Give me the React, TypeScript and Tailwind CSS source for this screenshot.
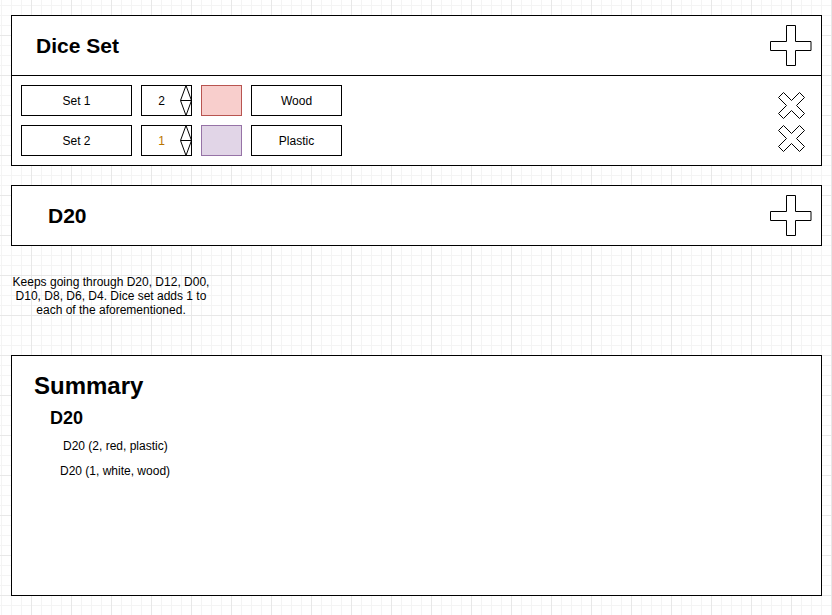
import React from 'react'

type DiceRow = {
  name: string
  count: number
  countColor: string
  swatch: string
  material: string
}

const rows: DiceRow[] = [
  { name: 'Set 1', count: 2, countColor: 'text-black', swatch: 'bg-[#f8cecc] border-[#b85450]', material: 'Wood' },
  { name: 'Set 2', count: 1, countColor: 'text-[#b87400]', swatch: 'bg-[#e1d5e7] border-[#9673a6]', material: 'Plastic' },
]

function PlusIcon() {
  return (
    <svg width="42" height="42" viewBox="0 0 42 42" className="shrink-0">
      <polygon
        points="16.5,0.5 25.5,0.5 25.5,16.5 41,16.5 41,25.5 25.5,25.5 25.5,40.5 16.5,40.5 16.5,25.5 0.5,25.5 0.5,16.5 16.5,16.5"
        fill="white"
        stroke="black"
        strokeWidth="1"
      />
    </svg>
  )
}

function CrossIcon() {
  // outlined X, arms cut square at the ends
  return (
    <svg width="27" height="27" viewBox="0 0 27 27" className="shrink-0">
      <polygon
        points="5.5,0.5 13.5,8.5 21.5,0.5 26.5,5.5 18.5,13.5 26.5,21.5 21.5,26.5 13.5,18.5 5.5,26.5 0.5,21.5 8.5,13.5 0.5,5.5"
        fill="white"
        stroke="black"
        strokeWidth="1"
      />
    </svg>
  )
}

function Spinner() {
  return (
    <svg width="12" height="31" viewBox="0 0 12 31" className="absolute right-[-1px] top-[-1px]">
      <polygon points="6,0.5 11.5,15.5 6,30.5 0.5,15.5" fill="none" stroke="black" strokeWidth="1" />
      <line x1="0.5" y1="15.5" x2="11.5" y2="15.5" stroke="black" strokeWidth="1" />
    </svg>
  )
}

function SetRow({ row }: { row: DiceRow }) {
  return (
    <div className="flex items-center gap-[9px] h-[31px] text-[12px] text-black">
      <div className="w-[111px] h-full border border-black bg-white flex items-center justify-center">
        {row.name}
      </div>
      <div className="relative w-[51px] h-full border border-black bg-white flex items-center pr-[10px] justify-center">
        <span className={row.countColor}>{row.count}</span>
        <Spinner />
      </div>
      <div className={`w-[41px] h-full border ${row.swatch}`} />
      <div className="w-[91px] h-full border border-black bg-white flex items-center justify-center">
        {row.material}
      </div>
    </div>
  )
}

export default function App() {
  return (
    <div className="w-[832px] h-[615px] overflow-hidden bg-white bg-[linear-gradient(to_right,#e8e8e8_1px,transparent_1px),linear-gradient(to_bottom,#e8e8e8_1px,transparent_1px),linear-gradient(to_right,#f4f4f4_1px,transparent_1px),linear-gradient(to_bottom,#f4f4f4_1px,transparent_1px)] bg-[size:40px_40px,40px_40px,10px_10px,10px_10px] bg-[position:31px_35px,31px_35px,1px_5px,1px_5px] font-['Liberation_Sans',Arial,sans-serif] text-black">
      <div className="flex flex-col pt-[15px] pl-[11px] pr-[10px]">
        {/* Dice Set panel */}
        <div className="h-[151px] border border-black bg-white flex flex-col">
          <div className="h-[59px] flex items-center justify-between pl-[24px] pr-[9px]">
            <h1 className="text-[21px] leading-[21px] font-bold">Dice Set</h1>
            <PlusIcon />
          </div>
          <div className="h-px bg-black" />
          <div className="h-[89px] flex pl-[9px]">
            <div className="flex flex-col gap-[9px] pt-[9px]">
              {rows.map((r) => (
                <SetRow key={r.name} row={r} />
              ))}
            </div>
            <div className="ml-auto flex flex-col gap-[6px] pt-[16px] pr-[16px]">
              <CrossIcon />
              <CrossIcon />
            </div>
          </div>
        </div>

        {/* D20 panel */}
        <div className="mt-[19px] h-[61px] border border-black bg-white flex items-center justify-between pl-[36px] pr-[9px]">
          <h2 className="text-[21px] leading-[21px] font-bold">D20</h2>
          <PlusIcon />
        </div>

        <p className="mt-[29px] w-[200px] text-center text-[12px] leading-[14px]">
          Keeps going through D20, D12, D00,
          <br />
          D10, D8, D6, D4. Dice set adds 1 to
          <br />
          each of the aforementioned.
        </p>

        {/* Summary panel */}
        <div className="mt-[38px] h-[241px] border border-black bg-white flex flex-col pt-[18px] pl-[22px]">
          <h2 className="text-[24px] leading-[24px] font-bold">Summary</h2>
          <h3 className="mt-[11px] ml-[16px] text-[18px] leading-[18px] font-bold">D20</h3>
          <p className="mt-[12px] ml-[29px] text-[12px] leading-[14px]">D20 (2, red, plastic)</p>
          <p className="mt-[11px] ml-[26px] text-[12px] leading-[14px]">D20 (1, white, wood)</p>
        </div>
      </div>
    </div>
  )
}
